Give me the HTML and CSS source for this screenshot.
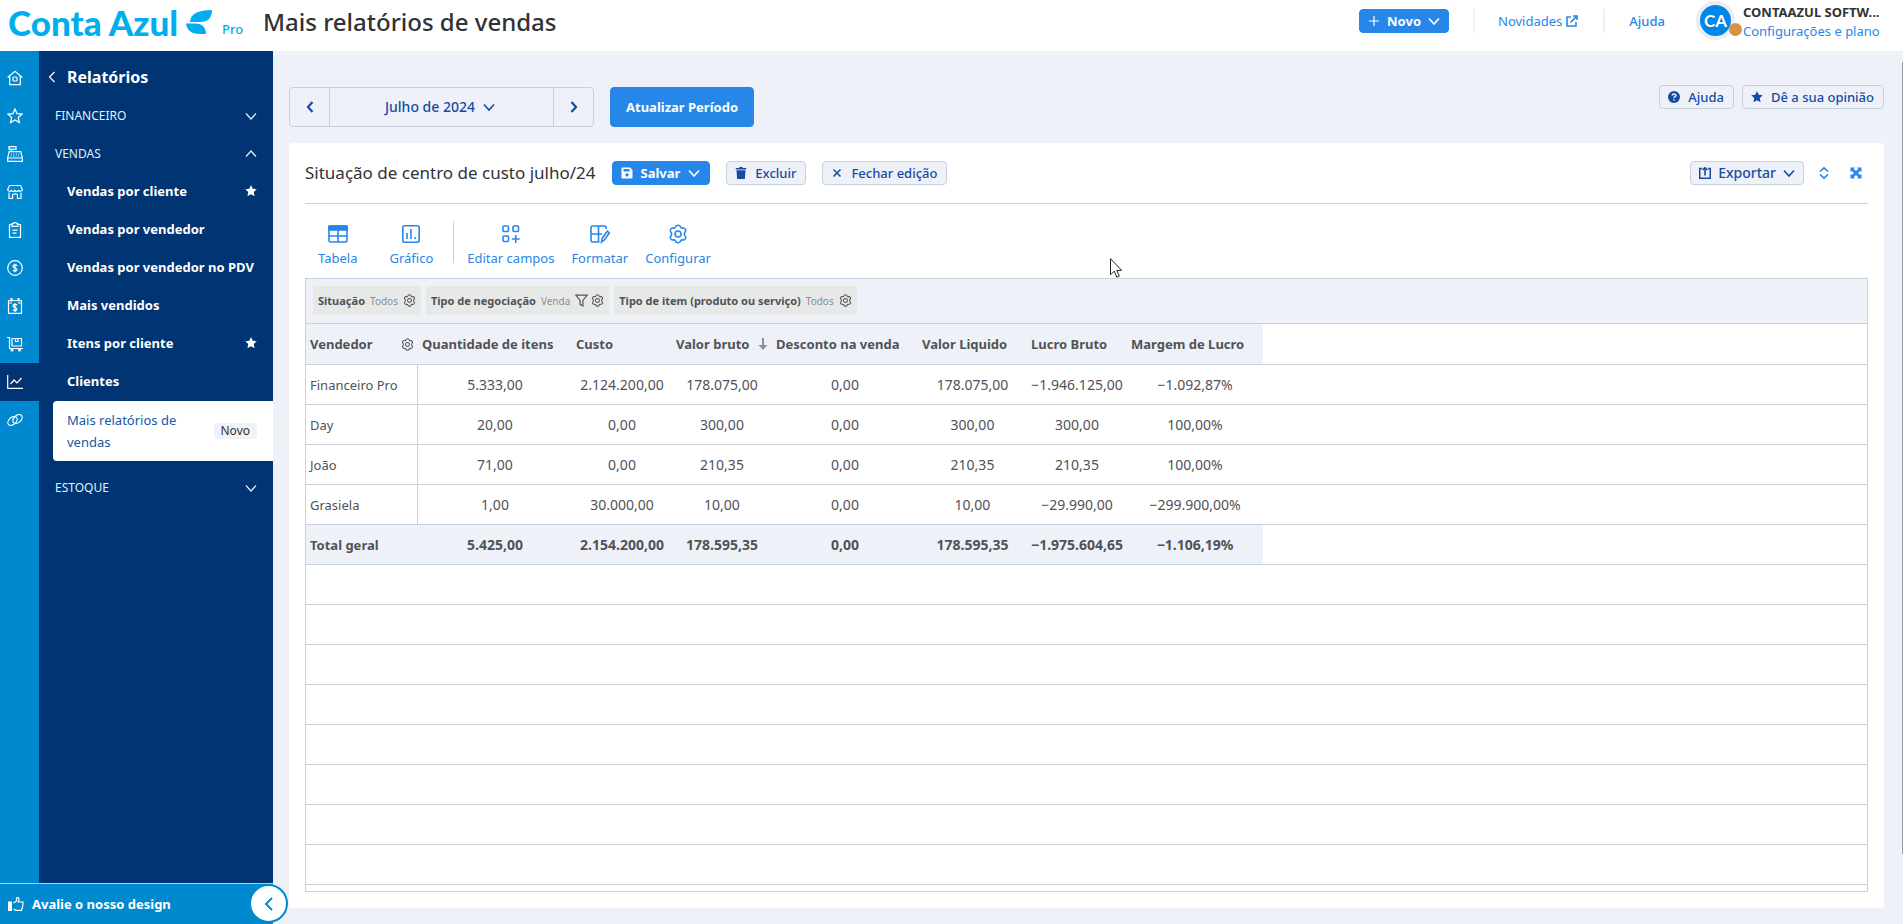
FILE: index.html
```html
<!DOCTYPE html>
<html lang="pt-BR">
<head>
<meta charset="utf-8">
<title>Mais relatórios de vendas</title>
<link rel="stylesheet" href="styles.css">
</head>
<body>
<svg class="sprite" aria-hidden="true">
  <symbol id="down" viewBox="0 0 12 12"><path d="M1 3.500 6 9l5-5.500"/></symbol>
  <symbol id="up" viewBox="0 0 12 12"><path d="M1 8.500 6 3l5 5.500"/></symbol>
  <symbol id="star" viewBox="0 0 12 12"><path fill="currentColor" stroke="none" d="m6 0 1.700 3.800 4.100.4-3.100 2.800.9 4.200L6 9.200l-3.600 2 .9-4.200L.2 4.200l4.100-.4z"/></symbol>
  <symbol id="gear" viewBox="0 0 20 20"><path d="M10 1.200c1.300 0 2.200.6 2.600 1.900.3.900 1 1.200 1.900 1 1.300-.3 2.300.1 2.900 1.200s.5 2.200-.5 3.100c-.7.700-.7 2.500 0 3.200 1 .9 1.100 2 .5 3.100s-1.600 1.500-2.900 1.200c-.9-.2-1.600.1-1.900 1-.4 1.300-1.300 1.900-2.600 1.900s-2.200-.6-2.600-1.900c-.3-.9-1-1.200-1.900-1-1.300.3-2.300-.1-2.900-1.200s-.5-2.200.5-3.100c.7-.7.7-2.500 0-3.200-1-.9-1.100-2-.5-3.100s1.600-1.500 2.900-1.200c.9.200 1.600-.1 1.900-1C7.800 1.800 8.700 1.200 10 1.200z"/><circle cx="10" cy="10" r="3"/></symbol>
</svg>

<header class="topbar">
  <div class="brand" aria-label="Conta Azul Pro">
    <span class="logo"><span>Conta</span><span>Azul</span></span>
    <svg class="mark" viewBox="0 0 26 24"><path d="M4 12C4 4 12 0 26 0c0 8-4 12-12 12z"/><path d="M0 13.500h9c7 0 11 4 11 10.500h-6C5 24 1 20 0 13.500z"/></svg>
    <span class="plan">Pro</span>
  </div>
  <h1>Mais relatórios de vendas</h1>
  <nav class="top-actions">
    <button class="btn primary new"><svg class="i12" viewBox="0 0 12 12"><path d="M6 1v10M1 6h10"/></svg>Novo<svg class="i12 w2"><use href="#down"/></svg></button>
    <span class="bar"></span>
    <a href="#news" class="news">Novidades<svg class="i12 w2" viewBox="0 0 12 12"><path d="M5 2H1v9h9V7M4.500 7.500 11 1M7 1h4v4"/></svg></a>
    <span class="bar"></span>
    <a href="#help" class="help">Ajuda</a>
    <div class="account">
      <span class="avatar">CA<i></i></span>
      <div class="who"><strong>CONTAAZUL SOFTW...</strong><a href="#plan">Configurações e plano</a></div>
    </div>
  </nav>
</header>

<div class="shell">
  <aside class="side">
    <div class="menus">
      <nav class="rail" aria-label="Principal">
        <a href="#" aria-label="Início"><svg viewBox="0 0 16 16"><path d="M.7 7.500 8 1.200l7.300 6.300M2.700 6.200v8.500h10.600V6.200"/><rect x="6" y="7" width="4" height="4" rx="1"/></svg></a>
        <a href="#" aria-label="Favoritos"><svg viewBox="0 0 16 16"><path d="m8 1 2 4.600 5 .5-3.700 3.400 1.100 5L8 12l-4.400 2.500 1.100-5L1 6.100l5-.5z"/></svg></a>
        <a href="#" aria-label="Caixa"><svg viewBox="0 0 16 16"><path d="M2 .7h7v2.600H2zM4.500 3.300v2.400M2.200 5.700h11.600l1.500 6v3.600H.7v-3.600zM.7 12h14.600"/><path stroke-dasharray="1 1.500" d="M4 8h9M3.500 10H13"/></svg></a>
        <a href="#" aria-label="Loja"><svg viewBox="0 0 16 16"><path d="M2.500 1.500h11l1.800 4c0 2-3.200 2.500-3.600.5-.5 2-3.200 2-3.700 0-.5 2-3.200 2-3.700 0-.4 2-3.600 1.500-3.600-.5zM2 8.500v6h3.500V11c0-1.500 5-1.500 5 0v3.500H14v-6"/></svg></a>
        <a href="#" aria-label="Pedidos"><svg viewBox="0 0 16 16"><path d="M5 2.500H2.500v12.800h11V2.500H11M5 1.700l1.500 0L7 .7h2l.5 1H11v2.600H5zM5.500 8.200h5M5.500 11.200h4"/></svg></a>
        <a href="#" aria-label="Financeiro"><svg viewBox="0 0 16 16"><circle cx="8" cy="8" r="7.300"/><path d="M10 6C9.500 4.500 6 4.500 6 6.400S10 7.700 10 9.600 6.500 11.500 6 10M8 3.700v8.600"/></svg></a>
        <a href="#" aria-label="Agenda"><svg viewBox="0 0 16 16"><path d="M1.500 2.500h13v12.800h-13zM1.500 5H5M11 5h3.500"/><path stroke-width="2" d="M4.500 0v3.500M11.500 0v3.500"/><path d="M10 7.500C9.500 6 6 6 6 7.900s4 1.300 4 3.200-3.500 1.900-4 .4M8 5v9"/></svg></a>
        <a href="#" aria-label="Estoque"><svg viewBox="0 0 16 16"><path d="M0 1.500h2.500v11H16M5 2.500h9.500v7.500H5zM8.500 2.500v3h2.500v-3"/><circle cx="5" cy="14" r="1"/><circle cx="12.500" cy="14" r="1"/></svg></a>
        <a href="#" aria-label="Relatórios" class="on"><svg viewBox="0 0 16 16"><path d="M.7 1v13.300H16M3.500 10l3.500-4 3 3 4.500-5"/></svg></a>
        <a href="#" aria-label="Integrações"><svg viewBox="0 0 16 16"><ellipse cx="5.500" cy="9" rx="5.300" ry="3.600" transform="rotate(-42 5.500 9)"/><ellipse cx="10.500" cy="7" rx="5.300" ry="3.600" transform="rotate(-42 10.500 7)"/></svg></a>
      </nav>
      <nav class="menu" aria-label="Relatórios">
        <a class="back" href="#"><svg viewBox="0 0 8 12"><path d="M6.500 1 1.500 6l5 5"/></svg>Relatórios</a>
        <button class="group">FINANCEIRO<svg class="i12"><use href="#down"/></svg></button>
        <button class="group">VENDAS<svg class="i12"><use href="#up"/></svg></button>
        <a class="item" href="#">Vendas por cliente<svg class="i12"><use href="#star"/></svg></a>
        <a class="item" href="#">Vendas por vendedor</a>
        <a class="item" href="#">Vendas por vendedor no PDV</a>
        <a class="item" href="#">Mais vendidos</a>
        <a class="item" href="#">Itens por cliente<svg class="i12"><use href="#star"/></svg></a>
        <a class="item" href="#">Clientes</a>
        <a class="current" href="#"><span>Mais relatórios de vendas</span><em>Novo</em></a>
        <button class="group last">ESTOQUE<svg class="i12"><use href="#down"/></svg></button>
      </nav>
    </div>
    <div class="rate">
      <a href="#"><svg viewBox="0 0 16 14"><path fill="currentColor" stroke="none" d="M0 4.500h4V14H0z"/><path d="M5.500 6 8.500 4V1c1.500-1 2.700-.3 2.500 1.500L10.200 5H15l-.3 4.500-1.200 3.800H8L5.500 12"/></svg>Avalie o nosso design</a>
      <button class="collapse" aria-label="Recolher menu"><svg viewBox="0 0 10 14"><path d="M8 1 2 7l6 6"/></svg></button>
    </div>
  </aside>

  <main class="main">
    <div class="period">
      <div class="picker">
        <button aria-label="Mês anterior"><svg class="arrow" viewBox="0 0 8 12"><path d="M6.500 1 2 6l4.500 5"/></svg></button>
        <button class="month">Julho de 2024<svg class="i12"><use href="#down"/></svg></button>
        <button aria-label="Próximo mês"><svg class="arrow" viewBox="0 0 8 12"><path d="M1.500 1 6 6l-4.500 5"/></svg></button>
      </div>
      <button class="btn primary refresh">Atualizar Período</button>
      <div class="feedback">
        <button class="btn"><svg class="i12" viewBox="0 0 12 12"><circle cx="6" cy="6" r="6" fill="currentColor" stroke="none"/><path class="inv" d="M4.200 4.600C4.200 2.500 7.900 2.500 7.900 4.500 7.900 5.700 6 5.600 6 7M6 8.300v1.200"/></svg>Ajuda</button>
        <button class="btn"><svg class="i12"><use href="#star"/></svg>Dê a sua opinião</button>
      </div>
    </div>

    <section class="card">
      <div class="card-head">
        <h2>Situação de centro de custo julho/24</h2>
        <button class="btn primary"><svg class="i12" viewBox="0 0 12 12"><path fill="currentColor" stroke="none" fill-rule="evenodd" d="M1.500.5H9L11.500 3v7.500a1 1 0 0 1-1 1h-9a1 1 0 0 1-1-1v-9a1 1 0 0 1 1-1zM2.500 2v2.500h6V2zM6 6.200a1.700 1.700 0 1 0 .01 0z"/></svg>Salvar<svg class="i12 w2"><use href="#down"/></svg></button>
        <button class="btn"><svg class="i12" viewBox="0 0 12 12"><path fill="currentColor" stroke="none" d="M.8 1H4l.5-1h3L8 1h3.200v1.600H.8zM1.500 3.300h9l-.6 8.700H2.100z"/></svg>Excluir</button>
        <button class="btn"><svg class="i12 w2" viewBox="0 0 12 12"><path d="m2.500 2.500 7 7m0-7-7 7"/></svg>Fechar edição</button>
        <div class="card-tools">
          <button class="btn export"><svg class="i12 w2" viewBox="0 0 12 12"><path d="M3 1.500H.7v9.800h10.600V1.500H9M6 8.500V.7M3.500 3 6 .7 8.500 3"/></svg>Exportar<svg class="i12 w2"><use href="#down"/></svg></button>
          <button class="icon" aria-label="Expandir linhas"><svg class="i12 w2" viewBox="0 0 12 12"><path d="M2 4.500 6 .8l4 3.700M2 7.500l4 3.700 4-3.700"/></svg></button>
          <button class="icon" aria-label="Tela cheia"><svg class="i12" viewBox="0 0 12 12"><path fill="currentColor" stroke="none" d="M.5.5h4.500L3.900 1.900 6 4l2.100-2.100L7 .5h4.500V5l-1.400-1.100L8 6l2.100 2.100L11.500 7v4.500H7l1.100-1.400L6 8l-2.100 2.100L5 11.500H.5V7l1.400 1.100L4 6 1.900 3.900.5 5z"/></svg></button>
        </div>
      </div>

      <div class="tools">
        <button><svg viewBox="0 0 20 20"><rect x="1" y="2" width="18" height="16" rx="1.500"/><path fill="currentColor" d="M1 2h18v4H1z"/><path d="M1 12h18M10 6v12"/></svg>Tabela</button>
        <button class="chart"><svg viewBox="0 0 20 20"><rect x="1.800" y="1.800" width="16.400" height="16.400" rx="2"/><path d="M6 9v6M10 5v10M14 13v2"/></svg>Gráfico</button>
        <span class="split"></span>
        <button><svg viewBox="0 0 20 20"><rect x="2" y="2" width="5.500" height="5.500" rx="1"/><rect x="12" y="2" width="5.500" height="5.500" rx="1"/><rect x="2" y="12" width="5.500" height="5.500" rx="1"/><path d="M14.700 11v8M10.700 15h8"/></svg>Editar campos</button>
        <button><svg viewBox="0 0 20 20"><path d="M9.500 18H2.500A1.500 1.500 0 0 1 1 16.500v-13A1.500 1.500 0 0 1 2.500 2h12A1.500 1.500 0 0 1 16 3.500V5M1 10h11M8.500 2v16"/><path d="m11.500 18 .8-3.800 5-7 2.200 1.600-5 7z"/></svg>Formatar</button>
        <button><svg><use href="#gear"/></svg>Configurar</button>
      </div>

      <div class="grid">
        <div class="filters">
          <button class="chip"><b>Situação</b><small>Todos</small><svg class="g"><use href="#gear"/></svg></button>
          <button class="chip"><b>Tipo de negociação</b><small>Venda</small><svg class="g funnel" viewBox="0 0 12 12"><path d="M.7 1h10.600L7.300 6v5L4.700 9.500V6z"/></svg><svg class="g"><use href="#gear"/></svg></button>
          <button class="chip"><b>Tipo de item (produto ou serviço)</b><small>Todos</small><svg class="g"><use href="#gear"/></svg></button>
        </div>
        <table>
          <colgroup><col class="c-name"><col class="c-qty"><col class="c-100"><col class="c-100"><col class="c-disc"><col class="c-net"><col class="c-100"><col class="c-margin"><col></colgroup>
          <thead><tr><th><span class="th">Vendedor<svg class="g"><use href="#gear"/></svg></span></th><th>Quantidade de itens</th><th>Custo</th><th><span class="th">Valor bruto<svg class="sort" viewBox="0 0 10 12"><path d="M5 0v9"/><path fill="currentColor" stroke="none" d="M.5 7h9L5 12z"/></svg></span></th><th>Desconto na venda</th><th>Valor Liquido</th><th>Lucro Bruto</th><th>Margem de Lucro</th><td></td></tr></thead>
          <tbody>
            <tr><td>Financeiro Pro</td><td>5.333,00</td><td>2.124.200,00</td><td>178.075,00</td><td>0,00</td><td>178.075,00</td><td>−1.946.125,00</td><td>−1.092,87%</td><td></td></tr>
            <tr><td>Day</td><td>20,00</td><td>0,00</td><td>300,00</td><td>0,00</td><td>300,00</td><td>300,00</td><td>100,00%</td><td></td></tr>
            <tr><td>João</td><td>71,00</td><td>0,00</td><td>210,35</td><td>0,00</td><td>210,35</td><td>210,35</td><td>100,00%</td><td></td></tr>
            <tr><td>Grasiela</td><td>1,00</td><td>30.000,00</td><td>10,00</td><td>0,00</td><td>10,00</td><td>−29.990,00</td><td>−299.900,00%</td><td></td></tr>
          </tbody>
          <tfoot>
            <tr class="total"><th>Total geral</th><th>5.425,00</th><th>2.154.200,00</th><th>178.595,35</th><th>0,00</th><th>178.595,35</th><th>−1.975.604,65</th><th>−1.106,19%</th><td></td></tr>
            <tr><td colspan="9"></td></tr><tr><td colspan="9"></td></tr><tr><td colspan="9"></td></tr><tr><td colspan="9"></td></tr>
            <tr><td colspan="9"></td></tr><tr><td colspan="9"></td></tr><tr><td colspan="9"></td></tr><tr><td colspan="9"></td></tr>
          </tfoot>
        </table>
      </div>
    </section>
  </main>
</div>
<span class="thumb"></span>
<svg class="cursor" viewBox="0 0 12 20"><path d="M.5.700v16l3.800-3.500 2.500 6 2.500-1.100-2.500-5.700h4.900z"/></svg>
</body>
</html>
```
FILE: styles.css
```css
* { box-sizing: border-box; }
body {
  margin: 0;
  min-height: 100vh;
  display: flex;
  flex-direction: column;
  background: #eef2f8;
  color: #303236;
  font: 13px/20px "Noto Sans", sans-serif;
}
button { font: inherit; color: inherit; background: none; border: 0; padding: 0; cursor: pointer; white-space: nowrap; }
a { color: #2687e9; text-decoration: none; }
svg { fill: none; stroke: currentColor; stroke-width: 1.2; flex: none; }
.sprite { position: absolute; width: 0; height: 0; }
.i12 { width: 12px; height: 12px; }
.w2 { stroke-width: 1.6; }

.topbar { display: flex; align-items: center; height: 51px; padding: 0 18px 0 8px; background: #fff; }
.brand { display: flex; align-items: center; color: #00aeef; width: 255px; padding-bottom: 8px; }
.logo { display: flex; gap: 7px; font: 900 35px/40px Lato, sans-serif; }
.mark { width: 26px; height: 24px; fill: currentColor; stroke: none; margin-left: 8px; }
.plan { font-weight: 500; margin: 14px 0 0 10px; }
h1 { margin: 0; font-size: 24px; line-height: 32px; font-weight: 500; padding-bottom: 8px; }
.top-actions { margin-left: auto; display: flex; align-items: center; padding-bottom: 10px; }
.bar { width: 2px; height: 24px; background: #eef0f4; }
.news { display: flex; align-items: center; gap: 4px; margin: 0 25px 0 23px; }
.help { margin: 0 31px 0 24px; font-weight: 500; }
.account { display: flex; align-items: center; gap: 8px; }
.avatar { position: relative; width: 39px; height: 39px; border: 4px solid #ececf1; border-radius: 50%; background: #0086e5; color: #fff; font: 700 17px/31px Lato, sans-serif; text-align: center; }
.avatar i { position: absolute; right: -11px; bottom: 0; width: 13px; height: 13px; border-radius: 50%; background: #d59343; }
.who { display: flex; flex-direction: column; min-width: 142px; padding-top: 2px; line-height: 19px; }

.btn { display: inline-flex; align-items: center; gap: 8px; height: 24px; padding: 0 9px 0 8px; border: 1px solid #c5d2de; border-radius: 4px; background: #eef2f8; color: #164ba5; font-weight: 500; }
.primary { border-color: #2687e9; background: #2687e9; color: #fff; font-weight: 700; }
.new { margin-right: 24px; padding: 0 8px; gap: 7px; }
.export { font-size: 14px; }

.shell { flex: 1; display: flex; }
.side { width: 273px; flex: none; display: flex; flex-direction: column; color: #fff; }
.side a { color: inherit; }
.menus { flex: 1; display: flex; background: #003472; }
.rail { width: 39px; padding-top: 8px; background: #0089cf; }
.rail a { display: flex; align-items: center; height: 38px; padding-left: 7px; }
.rail svg { width: 16px; height: 16px; }
.rail .on { background: #003472; }
.menu { flex: 1; padding: 8px 0 0 14px; display: flex; flex-direction: column; }
.back { display: flex; align-items: center; gap: 11px; height: 38px; padding-bottom: 2px; font-size: 16px; font-weight: 700; }
.back svg { width: 8px; height: 12px; margin-left: -5px; }
.group { display: flex; align-items: center; justify-content: space-between; height: 38px; padding: 0 16px 0 2px; font-size: 12px; color: #dff3ff; }
.item { display: flex; align-items: center; justify-content: space-between; height: 38px; padding: 0 16px 2px 14px; font-weight: 700; }
.menu .current { display: flex; align-items: center; justify-content: space-between; height: 60px; padding: 0 16px 0 14px; background: #fff; border-radius: 4px 0 0 4px; color: #1458a8; line-height: 22px; }
.current span { width: 130px; }
.current em { font-style: normal; font-size: 12px; line-height: 16px; padding: 0 7px; border-radius: 4px; background: #f0f3f4; color: #303236; }
.last { margin-top: 8px; }
.rate { position: relative; height: 41px; border-top: 1px solid #a5cfea; background: #0089cf; display: flex; align-items: center; }
.rate a { display: flex; align-items: center; gap: 8px; padding-left: 8px; font-weight: 700; }
.rate a svg { width: 16px; height: 14px; }
.collapse { position: absolute; right: -15px; top: 0; width: 39px; height: 39px; border-radius: 50%; border: 2px solid #0089cf; background: #fff; color: #0089cf; display: flex; align-items: center; justify-content: center; }
.collapse svg { width: 10px; height: 14px; stroke-width: 2; }

.main { flex: 1; min-width: 0; padding: 36px 19px 16px 16px; }
.period { display: flex; align-items: flex-start; }
.picker { display: flex; width: 305px; height: 40px; border: 1px solid #c5d2de; border-radius: 4px; color: #164ba5; }
.picker button { width: 39px; display: flex; align-items: center; justify-content: center; gap: 8px; }
.picker .month { flex: 1; border: solid #c5d2de; border-width: 0 1px; padding-right: 3px; font-size: 14px; font-weight: 500; }
.month svg { stroke-width: 1.6; }
.arrow { width: 8px; height: 12px; stroke-width: 2.2; }
.refresh { height: 40px; margin-left: 16px; padding: 0 15px; }
.feedback { margin: -2px 0 0 auto; display: flex; gap: 8px; }
.inv { stroke: #eef2f8; stroke-width: 1.5; }

.card { margin-top: 16px; padding: 16px; border-radius: 4px; background: #fff; }
.card-head { display: flex; align-items: center; gap: 16px; height: 45px; padding-bottom: 17px; border-bottom: 1px solid #c5d2de; }
h2 { margin: 0; font-size: 17px; line-height: 24px; font-weight: 400; }
.card-tools { margin-left: auto; display: flex; align-items: center; gap: 20px; padding-right: 6px; }
.icon { width: 12px; height: 12px; display: flex; color: #2687e9; }
.export { margin-right: -6px; padding: 0 8px; gap: 7px; }

.tools { display: flex; align-items: flex-start; gap: 17px; height: 74px; padding: 20px 13px 0; color: #2687e9; }
.tools button { display: flex; flex-direction: column; align-items: center; gap: 4px; }
.tools button svg { width: 20px; height: 20px; stroke-width: 1.6; }
.tools .chart { margin-left: 15px; }
.split { width: 1px; height: 42px; margin: -3px -4px 0 3px; background: #c5d2de; }

.grid { border: 1px solid #c5d2de; padding-bottom: 6px; color: #505257; }
.filters { display: flex; gap: 5px; padding: 7px 7px 8px; border-bottom: 1px solid #c5d2de; background: #eef2f8; }
.chip { display: flex; align-items: center; gap: 5px; height: 29px; padding: 0 5px; background: #e7e9e8; font-size: 11px; }
.chip small { font-size: 10px; color: #8b8d92; }
.g { width: 13px; height: 13px; stroke-width: 1.6; }
.funnel { margin-right: -2px; stroke-width: 1.1; }
table { width: 100%; table-layout: fixed; border-collapse: separate; border-spacing: 0; }
.c-name { width: 112px; } .c-qty { width: 154px; } .c-100 { width: 100px; } .c-disc { width: 146px; } .c-net { width: 109px; } .c-margin { width: 136px; }
th, td { height: 40px; padding: 0 4px; border-bottom: 1px solid #c5d2de; text-align: center; white-space: nowrap; font-size: 14px; }
thead th, thead td { height: 41px; }
th { background: #eef2f8; font-weight: 700; }
thead th { text-align: left; font-size: 13px; }
th:first-child, td:first-child { text-align: left; font-size: 13px; }
tbody td:first-child { border-right: 1px solid #c5d2de; }
.th { display: flex; align-items: center; justify-content: space-between; }
.sort { width: 10px; height: 12px; color: #8e9096; stroke-width: 2; }

.thumb { position: fixed; right: 0; top: 62px; bottom: 70px; width: 1px; background: #9c9ea1; }
.cursor { position: absolute; left: 1110px; top: 258px; width: 12px; height: 20px; fill: #fff; stroke: #222; stroke-width: 1; }
```
